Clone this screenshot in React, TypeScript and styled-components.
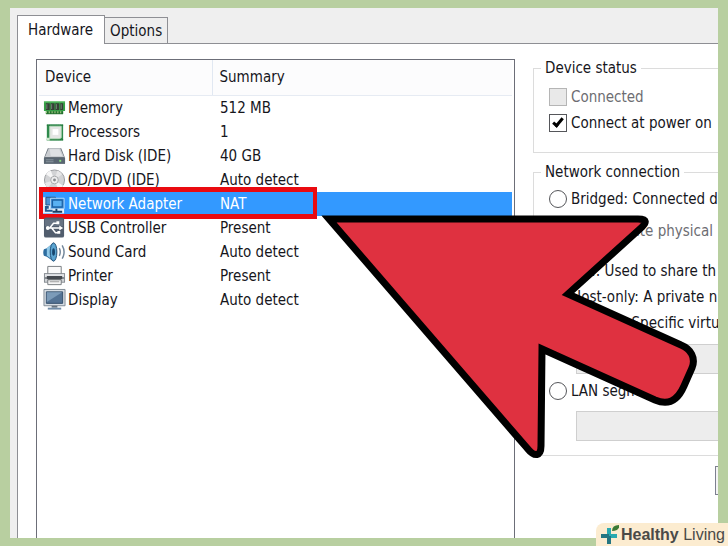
import React from "react";
import styled, { createGlobalStyle } from "styled-components";

const GlobalStyle = createGlobalStyle`
  *, *::before, *::after { box-sizing: border-box; }
  body {
    margin: 0;
    background: #b8cfa0;
    color: #16161c;
    font: 15px/18px "DejaVu Sans Condensed", "Noto Sans", sans-serif;
    overflow: hidden;
  }
`;

const Page = styled.main`
  position: relative;
  height: 100vh;
  padding: 8px 10px;
`;

const Dialog = styled.section`
  height: 100%;
  display: flex;
  flex-direction: column;
  padding: 7px 0 0 7px;
  background: #efefef;
  overflow: hidden;
  white-space: nowrap;
`;

const TabBar = styled.div`
  display: flex;
  align-items: flex-end;
`;

const Tab = styled.button<{ $active?: boolean }>`
  position: relative;
  z-index: ${(p) => (p.$active ? 1 : 0)};
  height: ${(p) => (p.$active ? 29 : 26)}px;
  margin: 0 0 ${(p) => (p.$active ? -1 : 0)}px ${(p) => (p.$active ? 0 : -1)}px;
  padding: 0 ${(p) => (p.$active ? 11 : 5)}px 0 ${(p) => (p.$active ? 10 : 5)}px;
  border: 1px solid #8e8f94;
  border-bottom: 0;
  background: ${(p) => (p.$active ? "#fff" : "#eeeeee")};
  color: inherit;
  font: inherit;
`;

const Panel = styled.div`
  flex: 1;
  min-height: 0;
  display: grid;
  grid-template-columns: minmax(0, 479fr) minmax(0, 185fr);
  gap: 18px;
  padding: 15px 0 0 18px;
  border: solid #8e8f94;
  border-width: 1px 0 0 1px;
  background: #fff;
`;

const DeviceList = styled.div`
  padding: 0 2px;
  border: 1px solid #6c6e78;
  border-bottom: 0;
`;

const DeviceTable = styled.table`
  width: 100%;
  table-layout: fixed;
  border-collapse: collapse;
`;

const HeadCell = styled.th<{ $wide?: boolean }>`
  width: ${(p) => (p.$wide ? "auto" : "173px")};
  height: 35px;
  padding: 0 0 0 ${(p) => (p.$wide ? 7 : 6)}px;
  border-bottom: 1px solid #e6ebf3;
  border-right: ${(p) => (p.$wide ? 0 : 1)}px solid #e1e8f2;
  background: #fcfcfd;
  font-weight: 400;
  text-align: left;
`;

const DeviceRow = styled.tr<{ $selected?: boolean }>`
  position: relative;
  height: 24px;
  background: ${(p) => (p.$selected ? "#3399ff" : "transparent")};
  color: ${(p) => (p.$selected ? "#fff" : "inherit")};
`;

const Cell = styled.td`
  padding: 0 0 0 8px;
`;

const NameCell = styled.td`
  padding: 0 0 0 4px;
`;

const DeviceName = styled.div`
  display: flex;
  align-items: center;
  gap: 2px;
`;

const DeviceIcon = styled.svg`
  width: 23px;
  height: 24px;
  flex: none;
`;

const Highlight = styled.span`
  position: absolute;
  left: 0;
  top: -5px;
  width: 278px;
  height: 32px;
  border: solid #ea0a10;
  border-width: 5px 4px;
`;

const Settings = styled.form`
  min-width: 0;
`;

const Group = styled.fieldset<{ $tall?: boolean }>`
  margin: 0 -60px 10px 0;
  padding: ${(p) => (p.$tall ? "5px 15px 14px" : "7px 15px 16px")};
  border: 1px solid #dcdcdc;
`;

const Legend = styled.legend`
  margin-left: -8px;
  padding: 0 4px;
`;

const Option = styled.label<{ $muted?: boolean; $nested?: boolean }>`
  display: flex;
  align-items: center;
  gap: 4px;
  height: 26px;
  margin: ${(p) => (p.$nested ? "6px 0 14px 20px" : "0")};
  color: ${(p) => (p.$muted ? "#6d6d72" : "inherit")};
`;

const Mark = styled.input`
  appearance: none;
  flex: none;
  display: grid;
  place-items: center;
  width: 18px;
  height: 18px;
  margin: 0;
  border: 1px solid #55565a;
  border-radius: ${(p) => (p.type === "radio" ? "50%" : "0")};
  background: #fff;

  &:disabled {
    border-color: #b5b5b5;
    background: #e9e9e9;
  }
  &[type="checkbox"]:checked::after {
    content: "";
    width: 6px;
    height: 11px;
    margin-bottom: 3px;
    border: solid #000;
    border-width: 0 3px 3px 0;
    transform: rotate(40deg);
  }
  &[type="radio"]:checked::after {
    content: "";
    width: 8px;
    height: 8px;
    border-radius: 50%;
    background: #222;
  }
`;

const Picker = styled.select`
  display: block;
  width: 100%;
  height: 30px;
  margin: 8px 0 4px 27px;
  border: 1px solid #cfcfcf;
  border-radius: 0;
  background: #ededed;
  opacity: 1;
`;

const LastPicker = styled(Picker)`
  margin-bottom: 0;
  margin-top: 7px;
`;

const Actions = styled.div`
  display: flex;
  justify-content: flex-end;
  margin-right: -110px;
`;

const ActionButton = styled.button`
  width: 113px;
  height: 29px;
  border: 1px solid #7d8090;
  background: #f4f4f4;
  font: inherit;
`;

const Pointer = styled.svg`
  position: absolute;
  left: 316px;
  top: 210px;
  width: 386px;
  height: 252px;
  pointer-events: none;
`;

const Brand = styled.footer`
  position: absolute;
  right: 0;
  bottom: 0;
  display: flex;
  align-items: center;
  height: 23px;
  padding: 0 3px 0 4px;
  gap: 2px;
  border-radius: 8px 0 0 0;
  background: #fcecd0;
  color: #4a4a48;
  font: 16px/22px "Liberation Sans", Arial, sans-serif;
  white-space: nowrap;
`;

const BrandIcon = styled.svg`
  width: 19px;
  height: 22px;
`;

const icons: Record<string, React.ReactNode> = {
  memory: (
    <>
      <path d="M1 5h22v10h-2v3H3v-3H1z" fill="#35a046" />
      <path d="M1 5.500h22" stroke="#83cf88" />
      <path d="M3 7h4v7H3zM8 7h4v7H8zM13 7h4v7h-4zM18 7h3v7h-3z" fill="#343f36" />
      <path d="M4 8v5M9 8v5M14 8v5M19 8v5" stroke="#768179" />
      <path d="M3 17h18" stroke="#24702f" strokeWidth="3" />
      <path d="M3 16.500h18" stroke="#b7d590" strokeWidth="2" strokeDasharray="1 2" />
    </>
  ),
  processor: (
    <>
      <path d="M4 4h17v17H4z" fill="#2f8a4c" />
      <path d="M4 5h17M4 20h17" stroke="#1f6f36" strokeDasharray="1 1" />
      <path d="M7 6h12v12l-2 1H7z" fill="#e4e6e4" stroke="#b6d9b9" />
      <path d="M10 9h6v6h-6z" fill="#fff" />
      <path d="M4 18h3v3H4z" fill="#cfe9cf" />
    </>
  ),
  disk: (
    <>
      <path d="M5 4h14l4 10v6H1v-6z" fill="#69727b" />
      <path d="M6 4h12l4 9H2z" fill="#c9ccd0" />
      <path d="M7 5h10l3 7H8z" fill="#dfe1e4" />
      <path d="M1 14h22v6H1z" fill="#5a6672" />
      <path d="M3 16h8M3 18h8" stroke="#8995a0" />
      <path d="M17 17h2" stroke="#8be27f" strokeWidth="2" />
    </>
  ),
  disc: (
    <>
      <circle cx="12" cy="12" r="10.500" fill="#d2d3d5" stroke="#9b9da0" />
      <path d="M12 12L3 6a11 11 0 0 1 5-4zM12 12l9 6a11 11 0 0 1-5 4z" fill="#f6f6f6" />
      <path d="M12 12L15 2a10 10 0 0 1 5 4zM12 12L5 20a10 10 0 0 1-3-5z" fill="#e7e7e8" />
      <circle cx="12" cy="12" r="4" fill="#eeeeef" stroke="#a9abae" />
      <circle cx="12" cy="12" r="1.500" fill="#85888c" />
    </>
  ),
  network: (
    <>
      <path d="M0 5h8v12h14v5H0z" fill="#e6f1fb" />
      <path d="M3 5h10v8H3z" fill="#4b93d4" stroke="#1c5288" />
      <path d="M3 14v5h7M5 14v3" fill="none" stroke="#235b91" strokeWidth="2" />
      <path d="M8 6h14v11H8z" fill="#2a7ac4" stroke="#bfe0fa" />
      <path d="M10 8h10v7H10z" fill="#59b1f2" stroke="#16599b" />
      <path d="M14 17v2M10 20h10" stroke="#173f65" strokeWidth="2" />
    </>
  ),
  usb: (
    <>
      <rect x="1" y="1" width="21" height="21" rx="2" fill="#515d6d" />
      <path d="M2 3h19v7H2z" fill="#667282" />
      <path d="M4 12h14M7 12l4-5h4M9 12l4 5h3" fill="none" stroke="#fff" strokeWidth="1.500" />
      <circle cx="5" cy="12" r="2" fill="#fff" />
      <path d="M17 9.500l4 2.500-4 2.500zM14 5h3v3h-3zM15 15h3v3h-3z" fill="#fff" />
    </>
  ),
  sound: (
    <>
      <path d="M1 9l3-1 7-6c3 4 3 15 0 20l-7-5-3-1c-1-2-1-5 0-7z" fill="#2d6c9f" />
      <path d="M4 8l6-5c-3 5-3 12 0 17l-6-4z" fill="#8ec8e8" />
      <ellipse cx="11" cy="12" rx="3.500" ry="9.500" fill="#5ba5d2" stroke="#234f77" />
      <ellipse cx="11" cy="12" rx="1.500" ry="4" fill="#17466e" />
      <path d="M17 8q2 4 0 8M20 5q4 7 0 14" fill="none" stroke="#71869a" strokeWidth="1.500" />
    </>
  ),
  printer: (
    <>
      <path d="M5 2h14v9H5z" fill="#fafafa" stroke="#777b80" />
      <path d="M1 9h22v10H1z" fill="#858b91" />
      <path d="M2 10h20v3H2z" fill="#e2e4e7" />
      <path d="M4 12h16v5H4z" fill="#454a50" />
      <path d="M2 15h3v3H2zM19 15h3v3h-3z" fill="#d0d3d6" />
      <path d="M5 16h14v5H5z" fill="#f5f5f5" stroke="#777b80" />
      <path d="M7 18h10" stroke="#999" />
    </>
  ),
  display: (
    <>
      <path d="M1 1h22v17H1z" fill="#d7dde3" stroke="#7e8994" />
      <path d="M3.500 3.500h17v12h-17z" fill="#547394" stroke="#344e6b" />
      <path d="M4 4h16L4 14z" fill="#7c9bb8" />
      <path d="M9 18h6v2H9z" fill="#69747f" />
      <path d="M5 20h14v2H5z" fill="#718ca7" />
    </>
  ),
};

const devices = [
  { icon: "memory", name: "Memory", summary: "512 MB" },
  { icon: "processor", name: "Processors", summary: "1" },
  { icon: "disk", name: "Hard Disk (IDE)", summary: "40 GB" },
  { icon: "disc", name: "CD/DVD (IDE)", summary: "Auto detect" },
  { icon: "network", name: "Network Adapter", summary: "NAT", selected: true },
  { icon: "usb", name: "USB Controller", summary: "Present" },
  { icon: "sound", name: "Sound Card", summary: "Auto detect" },
  { icon: "printer", name: "Printer", summary: "Present" },
  { icon: "display", name: "Display", summary: "Auto detect" },
];

export default function App() {
  return (
    <Page>
      <GlobalStyle />
      <Dialog>
        <TabBar role="tablist">
          <Tab role="tab" aria-selected="true" $active>Hardware</Tab>
          <Tab role="tab" aria-selected="false">Options</Tab>
        </TabBar>
        <Panel>
          <DeviceList>
            <DeviceTable>
              <thead>
                <tr>
                  <HeadCell>Device</HeadCell>
                  <HeadCell $wide>Summary</HeadCell>
                </tr>
              </thead>
              <tbody>
                {devices.map((d) => (
                  <DeviceRow key={d.name} $selected={d.selected}>
                    <NameCell>
                      <DeviceName>
                        <DeviceIcon viewBox="0 0 24 24" aria-hidden="true">{icons[d.icon]}</DeviceIcon>
                        {d.name}
                      </DeviceName>
                      {d.selected && <Highlight />}
                    </NameCell>
                    <Cell>{d.summary}</Cell>
                  </DeviceRow>
                ))}
              </tbody>
            </DeviceTable>
          </DeviceList>
          <Settings>
            <Group>
              <Legend>Device status</Legend>
              <Option $muted><Mark type="checkbox" disabled />Connected</Option>
              <Option><Mark type="checkbox" defaultChecked />Connect at power on</Option>
            </Group>
            <Group $tall>
              <Legend>Network connection</Legend>
              <Option><Mark type="radio" name="net" />Bridged: Connected d</Option>
              <Option $muted $nested><Mark type="checkbox" disabled />Replicate physical</Option>
              <Option><Mark type="radio" name="net" defaultChecked />NAT: Used to share th</Option>
              <Option><Mark type="radio" name="net" />Host-only: A private n</Option>
              <Option><Mark type="radio" name="net" />Custom: Specific virtu</Option>
              <Picker disabled aria-label="Virtual network" />
              <Option><Mark type="radio" name="net" />LAN segment:</Option>
              <LastPicker disabled aria-label="LAN segment" />
            </Group>
            <Actions>
              <ActionButton type="button" aria-label="LAN segments" />
            </Actions>
          </Settings>
        </Panel>
      </Dialog>
      <Pointer viewBox="316 210 386 252" aria-hidden="true">
        <path
          d="M329 219H638C648 219 646 223 642 227L568 294L681 345C691 349 696 358 692 368L684 386C677 402 667 405 655 400L542 349L541 446C541 456 535 458 527 448Z"
          fill="#df3140"
          stroke="#000"
          strokeWidth="7"
        />
      </Pointer>
      <Brand>
        <BrandIcon viewBox="0 0 19 22" aria-hidden="true">
          <path d="M9 4v16M1 12h16" stroke="#2aa9b0" strokeWidth="4" />
          <path d="M9 12v8M9 12H1" stroke="#23616f" strokeWidth="4" strokeOpacity=".7" />
          <path d="M12 7q0-6 7-6q1 6-7 6z" fill="#3c7b35" />
        </BrandIcon>
        <span><b>Healthy</b> Living</span>
      </Brand>
    </Page>
  );
}
